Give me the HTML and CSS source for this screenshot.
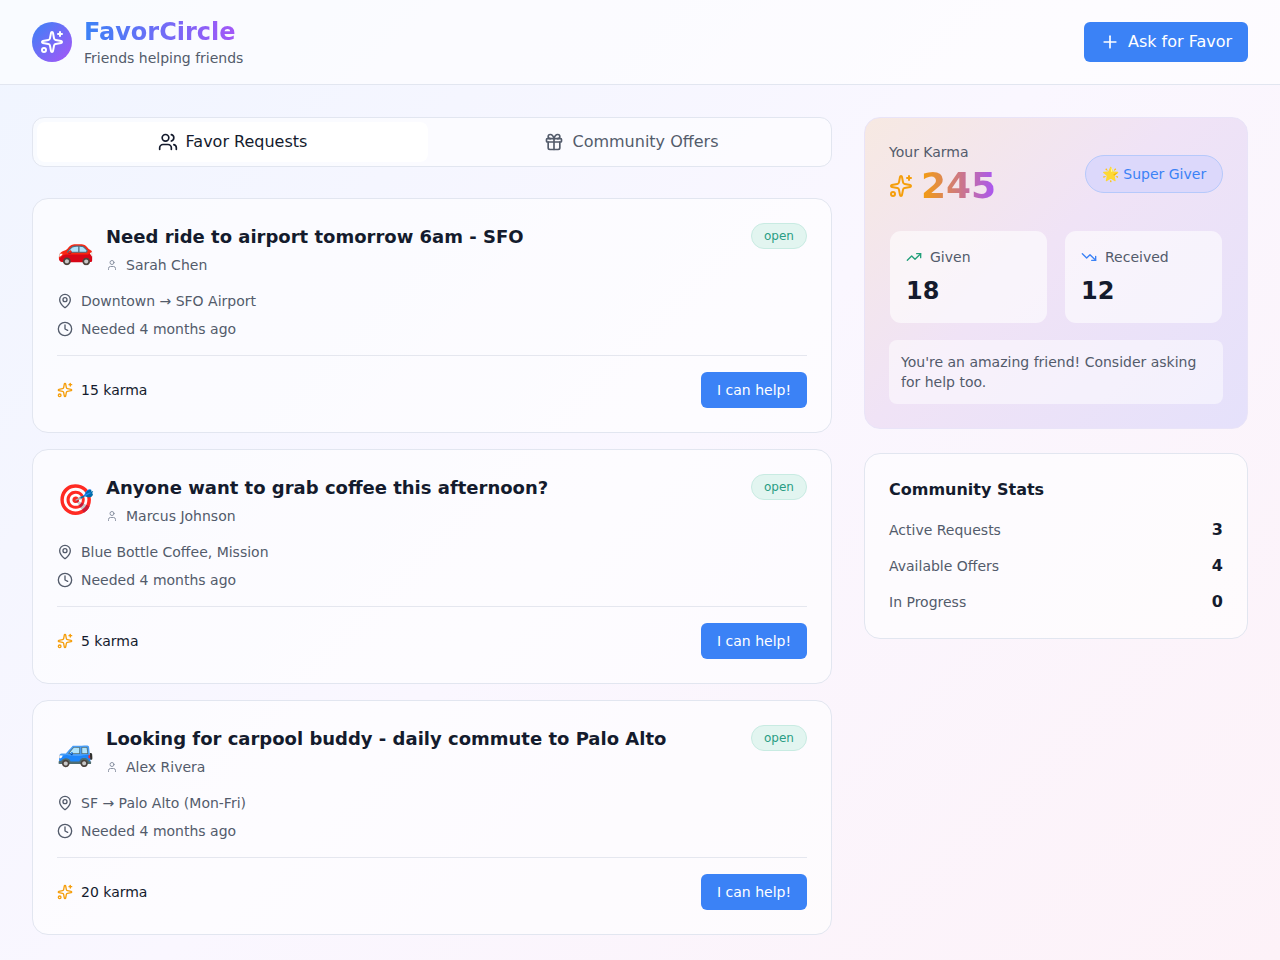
FILE: index.html
```html
<!DOCTYPE html>
<html lang="en">
<head>
<meta charset="utf-8">
<title>FavorCircle</title>
<link rel="stylesheet" href="styles.css">
</head>
<body>
<svg class="defs" width="0" height="0" aria-hidden="true">
  <defs>
    <symbol id="i-sparkles" viewBox="0 0 24 24"><path d="M11.017 2.814a1 1 0 0 1 1.966 0l1.051 5.558a2 2 0 0 0 1.594 1.594l5.558 1.051a1 1 0 0 1 0 1.966l-5.558 1.051a2 2 0 0 0-1.594 1.594l-1.051 5.558a1 1 0 0 1-1.966 0l-1.051-5.558a2 2 0 0 0-1.594-1.594l-5.558-1.051a1 1 0 0 1 0-1.966l5.558-1.051a2 2 0 0 0 1.594-1.594z"/><path d="M20 2v4"/><path d="M22 4h-4"/><circle cx="4" cy="20" r="2"/></symbol>
    <symbol id="i-user" viewBox="0 0 24 24"><path d="M19 21v-2a4 4 0 0 0-4-4H9a4 4 0 0 0-4 4v2"/><circle cx="12" cy="7" r="4"/></symbol>
    <symbol id="i-pin" viewBox="0 0 24 24"><path d="M20 10c0 4.993-5.539 10.193-7.399 11.799a1 1 0 0 1-1.202 0C9.539 20.193 4 14.993 4 10a8 8 0 0 1 16 0"/><circle cx="12" cy="10" r="3"/></symbol>
    <symbol id="i-clock" viewBox="0 0 24 24"><circle cx="12" cy="12" r="10"/><polyline points="12 6 12 12 16 14"/></symbol>
  </defs>
</svg>
<header class="topbar">
  <div class="brand">
    <div class="logo"><svg class="icon icon-24"><use href="#i-sparkles"/></svg></div>
    <div class="brand-text">
      <h1 class="brand-name">FavorCircle</h1>
      <p class="brand-tag">Friends helping friends</p>
    </div>
  </div>
  <button class="btn btn-ask"><svg class="icon icon-20" viewBox="0 0 24 24"><path d="M5 12h14"/><path d="M12 5v14"/></svg>Ask for Favor</button>
</header>
<main class="layout">
  <section class="feed">
    <div class="tabs">
      <div class="tab tab-active"><svg class="icon icon-20" viewBox="0 0 24 24"><path d="M16 21v-2a4 4 0 0 0-4-4H6a4 4 0 0 0-4 4v2"/><path d="M16 3.128a4 4 0 0 1 0 7.744"/><path d="M22 21v-2a4 4 0 0 0-3-3.87"/><circle cx="9" cy="7" r="4"/></svg>Favor Requests</div>
      <div class="tab"><svg class="icon icon-20" viewBox="0 0 24 24"><rect x="3" y="8" width="18" height="4" rx="1"/><path d="M12 8v13"/><path d="M19 12v7a2 2 0 0 1-2 2H7a2 2 0 0 1-2-2v-7"/><path d="M7.5 8a2.5 2.5 0 0 1 0-5A4.8 8 0 0 1 12 8a4.8 8 0 0 1 4.5-5 2.5 2.5 0 0 1 0 5"/></svg>Community Offers</div>
    </div>
    <div class="cards">
      <article class="card">
        <div class="card-head">
          <span class="emoji">🚗</span>
          <div class="card-title-wrap">
            <h2 class="card-title">Need ride to airport tomorrow 6am - SFO</h2>
            <div class="person"><svg class="icon icon-12"><use href="#i-user"/></svg>Sarah Chen</div>
          </div>
          <span class="badge-open">open</span>
        </div>
        <div class="meta">
          <div class="meta-row"><svg class="icon icon-16"><use href="#i-pin"/></svg>Downtown → SFO Airport</div>
          <div class="meta-row"><svg class="icon icon-16"><use href="#i-clock"/></svg>Needed 4 months ago</div>
        </div>
        <div class="card-foot">
          <div class="reward"><svg class="icon icon-16 amber"><use href="#i-sparkles"/></svg>15 karma</div>
          <button class="btn btn-help">I can help!</button>
        </div>
      </article>
      <article class="card">
        <div class="card-head">
          <span class="emoji">🎯</span>
          <div class="card-title-wrap">
            <h2 class="card-title">Anyone want to grab coffee this afternoon?</h2>
            <div class="person"><svg class="icon icon-12"><use href="#i-user"/></svg>Marcus Johnson</div>
          </div>
          <span class="badge-open">open</span>
        </div>
        <div class="meta">
          <div class="meta-row"><svg class="icon icon-16"><use href="#i-pin"/></svg>Blue Bottle Coffee, Mission</div>
          <div class="meta-row"><svg class="icon icon-16"><use href="#i-clock"/></svg>Needed 4 months ago</div>
        </div>
        <div class="card-foot">
          <div class="reward"><svg class="icon icon-16 amber"><use href="#i-sparkles"/></svg>5 karma</div>
          <button class="btn btn-help">I can help!</button>
        </div>
      </article>
      <article class="card">
        <div class="card-head">
          <span class="emoji">🚙</span>
          <div class="card-title-wrap">
            <h2 class="card-title">Looking for carpool buddy - daily commute to Palo Alto</h2>
            <div class="person"><svg class="icon icon-12"><use href="#i-user"/></svg>Alex Rivera</div>
          </div>
          <span class="badge-open">open</span>
        </div>
        <div class="meta">
          <div class="meta-row"><svg class="icon icon-16"><use href="#i-pin"/></svg>SF → Palo Alto (Mon-Fri)</div>
          <div class="meta-row"><svg class="icon icon-16"><use href="#i-clock"/></svg>Needed 4 months ago</div>
        </div>
        <div class="card-foot">
          <div class="reward"><svg class="icon icon-16 amber"><use href="#i-sparkles"/></svg>20 karma</div>
          <button class="btn btn-help">I can help!</button>
        </div>
      </article>
    </div>
  </section>
  <aside class="side">
    <section class="karma">
      <div class="karma-top">
        <div>
          <p class="karma-label">Your Karma</p>
          <div class="karma-score"><svg class="icon icon-24 amber"><use href="#i-sparkles"/></svg><span class="karma-num">245</span></div>
        </div>
        <span class="level">🌟 Super Giver</span>
      </div>
      <div class="karma-grid">
        <div class="tile">
          <div class="tile-label"><svg class="icon icon-16 green" viewBox="0 0 24 24"><polyline points="22 7 13.5 15.5 8.5 10.5 2 17"/><polyline points="16 7 22 7 22 13"/></svg>Given</div>
          <div class="tile-value">18</div>
        </div>
        <div class="tile">
          <div class="tile-label"><svg class="icon icon-16 blue" viewBox="0 0 24 24"><polyline points="22 17 13.5 8.5 8.5 13.5 2 7"/><polyline points="16 17 22 17 22 11"/></svg>Received</div>
          <div class="tile-value">12</div>
        </div>
      </div>
      <p class="karma-note">You're an amazing friend! Consider asking for help too.</p>
    </section>
    <section class="stats">
      <h3 class="stats-title">Community Stats</h3>
      <div class="stats-row"><span>Active Requests</span><strong>3</strong></div>
      <div class="stats-row"><span>Available Offers</span><strong>4</strong></div>
      <div class="stats-row"><span>In Progress</span><strong>0</strong></div>
    </section>
  </aside>
</main>
</body>
</html>
```

FILE: styles.css
```css
* { box-sizing: border-box; margin: 0; padding: 0; }
html, body { height: 100%; }
body {
  font-family: "DejaVu Sans", sans-serif;
  color: #141b2d;
  background: linear-gradient(135deg, #f0f5ff 0%, #faf7ff 50%, #fdf2f8 100%);
  min-height: 960px;
  overflow: hidden;
}
.defs { position: absolute; }
.icon { fill: none; stroke: currentColor; stroke-width: 2; stroke-linecap: round; stroke-linejoin: round; flex: none; display: block; }
.icon-12 { width: 12px; height: 12px; }
.icon-16 { width: 16px; height: 16px; }
.icon-20 { width: 20px; height: 20px; }
.icon-24 { width: 24px; height: 24px; }
.amber { color: #f59e0b; }
.green { color: #22a07a; }
.blue { color: #3b82f6; }

.topbar {
  height: 85px;
  display: flex;
  align-items: center;
  justify-content: space-between;
  padding: 0 32px;
  background: rgba(255, 255, 255, .6);
  border-bottom: 1px solid #e2e6f0;
}
.brand { display: flex; align-items: center; gap: 12px; }
.logo {
  width: 40px; height: 40px; border-radius: 50%;
  display: flex; align-items: center; justify-content: center;
  color: #fff;
  background: linear-gradient(135deg, #3b82f6, #a855f7);
}
.brand-name {
  font-size: 24px; line-height: 32px; font-weight: 700;
  background: linear-gradient(90deg, #3b82f6, #a855f7);
  -webkit-background-clip: text; background-clip: text;
  color: transparent;
}
.brand-tag { font-size: 14px; line-height: 20px; color: #535b6b; }

.btn { border: 0; background: #3b82f6; color: #fff; font-family: inherit; border-radius: 6px; display: flex; align-items: center; justify-content: center; }
.btn-ask { width: 164px; height: 40px; gap: 8px; font-size: 16px; line-height: 24px; padding-bottom: 1px; }
.btn-help { width: 106px; height: 36px; font-size: 14px; }

.layout { display: grid; grid-template-columns: 800px 384px; gap: 32px; padding: 32px; }

.tabs {
  height: 50px; display: grid; grid-template-columns: 1fr 1fr; gap: 8px; padding: 4px;
  background: rgba(255, 255, 255, .55);
  border: 1px solid #e2e6f0; border-radius: 12px;
}
.tab {
  display: flex; align-items: center; justify-content: center; gap: 8px;
  font-size: 16px; line-height: 24px; padding-bottom: 1px; color: #535b6b; border-radius: 8px;
}
.tab-active { background: #fff; color: #141b2d; }

.cards { display: flex; flex-direction: column; gap: 16px; margin-top: 31px; }
.card {
  height: 235px; padding: 24px;
  background: rgba(255, 255, 255, .6);
  border: 1px solid #e2e6f0; border-radius: 16px;
}
.card-head { display: flex; align-items: flex-start; gap: 12px; }
.emoji { font-size: 30px; width: 37px; line-height: 52px; height: 54px; flex: none; font-family: "Noto Color Emoji", "DejaVu Sans", sans-serif; }
.card-title-wrap { flex: 1; min-width: 0; }
.card-title { font-size: 18px; line-height: 28px; font-weight: 700; color: #141b2d; }
.person { display: flex; align-items: center; gap: 8px; font-size: 14px; line-height: 20px; color: #535b6b; margin-top: 4px; }
.person .icon { color: #8b93a3; }
.badge-open {
  flex: none; width: 56px; height: 26px; border-radius: 13px;
  display: flex; align-items: center; justify-content: center;
  font-size: 12px; color: #2a9d84;
  background: #e2f5f0; border: 1px solid #c8ebe2;
}
.meta { margin-top: 14px; display: flex; flex-direction: column; gap: 8px; }
.meta-row { display: flex; align-items: center; gap: 8px; font-size: 14px; line-height: 20px; color: #535b6b; }
.card-foot {
  display: flex; align-items: center; justify-content: space-between;
  margin-top: 16px; padding-top: 16px; border-top: 1px solid #e5e7ef;
}
.reward { display: flex; align-items: center; gap: 8px; font-size: 14px; color: #141b2d; }

.side { display: flex; flex-direction: column; gap: 24px; }
.karma {
  height: 312px; padding: 24px;
  border: 1px solid #e9e4f8; border-radius: 16px;
  background: linear-gradient(135deg, #f7e9e2 0%, #f0e3f6 45%, #e5e1fb 100%);
}
.karma-top { display: flex; align-items: center; justify-content: space-between; }
.karma-label { font-size: 14px; line-height: 20px; color: #535b6b; }
.karma-score { display: flex; align-items: center; gap: 8px; margin-top: 4px; }
.karma-num {
  font-size: 36px; line-height: 40px; font-weight: 700;
  background: linear-gradient(90deg, #f59e0b, #a855f7);
  -webkit-background-clip: text; background-clip: text; color: transparent;
}
.level {
  width: 138px; height: 38px; border-radius: 19px;
  display: flex; align-items: center; justify-content: center;
  font-size: 14px; color: #3b82f6;
  background: #dcd8fb; border: 1px solid #b6c9fb;
}
.karma-grid { display: grid; grid-template-columns: 1fr 1fr; gap: 16px; margin-top: 24px; }
.tile {
  height: 94px; padding: 16px;
  background: rgba(255, 255, 255, .6);
  background-clip: padding-box;
  border: 1px solid transparent;
  border-radius: 12px;
}
.tile-label { display: flex; align-items: center; gap: 8px; font-size: 14px; line-height: 20px; color: #535b6b; }
.tile-value { font-size: 24px; line-height: 32px; font-weight: 700; margin-top: 8px; }
.karma-note {
  margin-top: 16px; padding: 12px; border-radius: 8px;
  font-size: 14px; line-height: 20px; color: #535b6b;
  background: rgba(255, 255, 255, .5);
}
.stats {
  height: 186px; padding: 24px;
  background: rgba(255, 255, 255, .6);
  border: 1px solid #e2e6f0; border-radius: 16px;
}
.stats-title { font-size: 16px; line-height: 24px; font-weight: 700; margin-bottom: 18px; }
.stats-row { display: flex; align-items: baseline; justify-content: space-between; height: 24px; margin-bottom: 12px; font-size: 14px; color: #535b6b; }
.stats-row strong { font-size: 16px; color: #141b2d; }
```
